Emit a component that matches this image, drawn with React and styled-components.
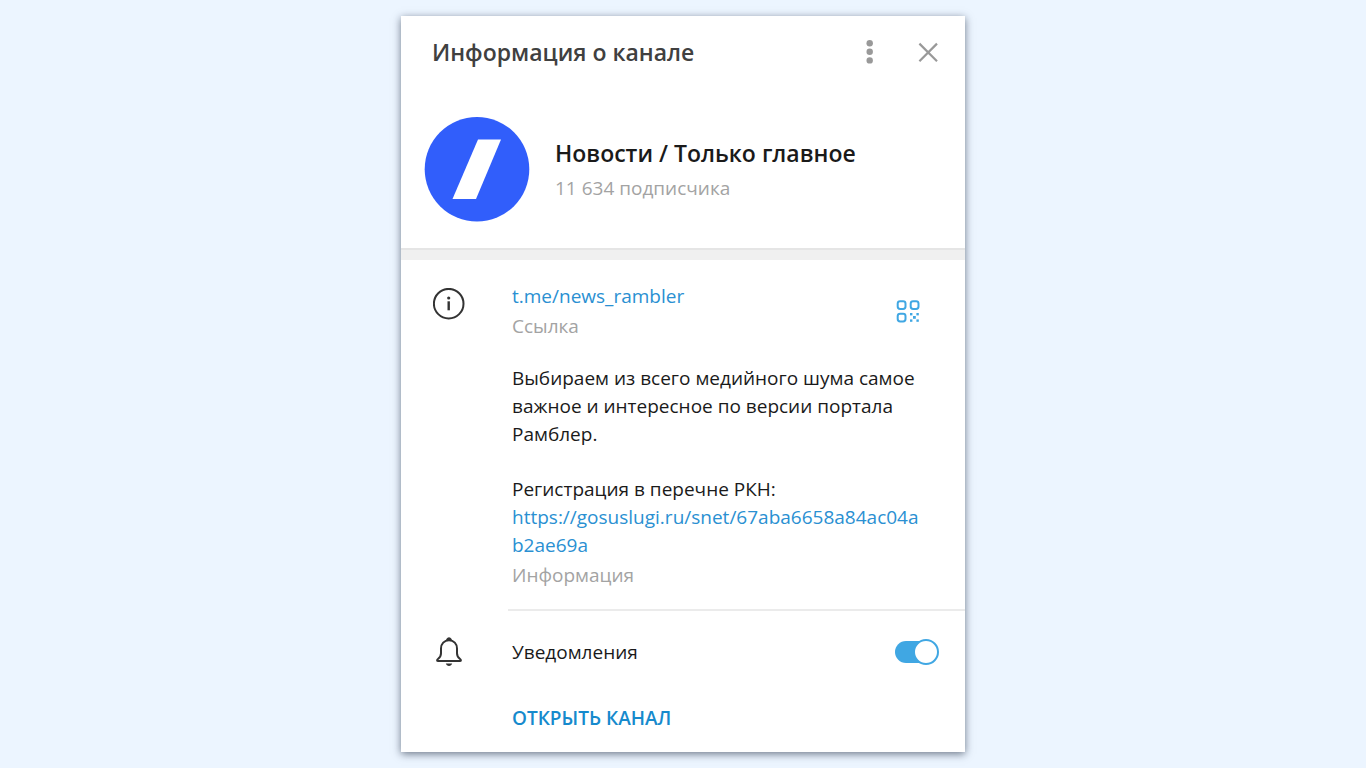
import React from "react";
import styled, { createGlobalStyle } from "styled-components";

const GlobalStyle = createGlobalStyle`
  *, *::before, *::after {
    box-sizing: border-box;
  }
  body {
    margin: 0;
    min-height: 100vh;
    background: #ecf5ff;
    color: #1a1a1a;
    font-family: "Open Sans", "Noto Sans", sans-serif;
    font-size: 19px;
    line-height: 28px;
  }
`;

const Page = styled.main`
  display: flex;
  justify-content: center;
  padding: 16px;
`;

const Card = styled.article`
  width: 100%;
  max-width: 564px;
  background: #fff;
  box-shadow: 0 2px 8px rgba(40, 52, 72, 0.65);
`;

const Header = styled.header`
  display: flex;
  align-items: center;
  gap: 26px;
  height: 72px;
  padding: 0 21px 0 31px;
`;

const Title = styled.h1`
  flex: 1;
  margin: 0;
  color: #404040;
  font-size: 23px;
  font-weight: 600;
  line-height: 32px;
`;

const IconButton = styled.button`
  display: flex;
  width: 32px;
  height: 32px;
  padding: 0;
  border: 0;
  background: none;
  color: ${(p) => p.$color};
  cursor: pointer;
`;

const Profile = styled.section`
  display: flex;
  align-items: center;
  gap: 25px;
  padding: 28px 23px 26px;
`;

const Avatar = styled.svg`
  flex: none;
  width: 106px;
  height: 106px;
`;

const ChannelName = styled.h2`
  margin: 0;
  color: #1a1a1a;
  font-size: 23px;
  font-weight: 600;
  line-height: 34px;
`;

const Muted = styled.p`
  margin: ${(p) => p.$top || 0}px 0 0;
  color: #a3a3a3;
`;

const Band = styled.hr`
  height: 12px;
  margin: 0;
  border: 0;
  border-top: 2px solid #e5e5e5;
  background: #f0f0f0;
`;

const Row = styled.section`
  display: grid;
  grid-template-columns: 32px 1fr;
  column-gap: 47px;
  padding: ${(p) => p.$padding};
`;

const LinkRow = styled.div`
  display: flex;
  align-items: center;
  justify-content: space-between;
`;

const TextLink = styled.a`
  color: #2a90d2;
  text-decoration: none;
  word-break: break-all;
`;

const Description = styled.p`
  margin: ${(p) => p.$top}px 0 0;
`;

const Separator = styled.hr`
  height: 2px;
  margin: 0 0 0 107px;
  border: 0;
  background: #ebebeb;
`;

const SwitchRow = styled.div`
  display: flex;
  align-items: center;
  justify-content: space-between;
`;

const Switch = styled.input`
  appearance: none;
  position: relative;
  width: 42px;
  height: 22px;
  margin: 0;
  border-radius: 11px;
  background: #40a7e3;
  cursor: pointer;

  &::after {
    content: "";
    position: absolute;
    top: -2px;
    right: -2px;
    width: 26px;
    height: 26px;
    border: 2px solid #40a7e3;
    border-radius: 50%;
    background: #fff;
  }

  &:not(:checked) {
    background: #b3b3b3;
  }

  &:not(:checked)::after {
    right: 18px;
    border-color: #b3b3b3;
  }
`;

const Footer = styled.footer`
  padding: 0 24px 20px 111px;
`;

const OpenButton = styled.button`
  padding: 0;
  border: 0;
  background: none;
  color: #168acd;
  font: inherit;
  font-weight: 600;
  cursor: pointer;
`;

const RowIcon = styled.svg`
  width: 32px;
  height: 32px;
  margin-top: ${(p) => p.$top || 0}px;
`;

function DotsIcon() {
  return (
    <svg width="32" height="32" viewBox="0 0 32 32" fill="currentColor" aria-hidden="true">
      <circle cx="15.7" cy="7.2" r="3.2" />
      <circle cx="15.7" cy="15.8" r="3.2" />
      <circle cx="15.7" cy="24.4" r="3.2" />
    </svg>
  );
}

function CloseIcon() {
  return (
    <svg width="32" height="32" viewBox="0 0 32 32" stroke="currentColor" strokeWidth="2.2" aria-hidden="true">
      <path d="M7.400 7.600 25 25.200M25 7.600 7.400 25.200" />
    </svg>
  );
}

function InfoIcon() {
  return (
    <RowIcon $top={6} viewBox="0 0 32 32" fill="none" aria-hidden="true">
      <circle cx="15.700" cy="15.700" r="14.800" stroke="#333" strokeWidth="2" />
      <circle cx="15.700" cy="10" r="1.600" fill="#333" />
      <path d="M15.700 13.300v9" stroke="#333" strokeWidth="2.400" />
    </RowIcon>
  );
}

function BellIcon() {
  return (
    <RowIcon viewBox="0 0 32 32" fill="none" aria-hidden="true">
      <path
        d="M16 4.200C11.200 4.200 8 7.800 8 12.400v4.800c0 2.500-.9 4.100-2.800 5.600-1.600 1.300-1.400 2.300.1 2.300h21.400c1.500 0 1.700-1 .1-2.300-1.900-1.500-2.800-3.100-2.800-5.600v-4.800C24 7.800 20.800 4.200 16 4.200Z"
        stroke="#333"
        strokeWidth="2"
        strokeLinejoin="round"
      />
      <path d="M13.600 4.200a2.400 2.400 0 0 1 4.800 0Z" fill="#333" stroke="#333" />
      <path d="M12.800 27.600h6.400c-.5 1.500-1.700 2.300-3.200 2.300s-2.700-.8-3.200-2.300Z" fill="#333" />
    </RowIcon>
  );
}

function QrIcon() {
  return (
    <svg width="32" height="32" viewBox="0 0 32 32" fill="none" aria-hidden="true">
      <g stroke="currentColor" strokeWidth="2">
        <rect x="5.700" y="6.200" width="7.800" height="7.800" rx="2.400" />
        <rect x="18.700" y="6.200" width="7.800" height="7.800" rx="2.400" />
        <rect x="5.700" y="18.700" width="7.800" height="7.800" rx="2.400" />
      </g>
      <g fill="currentColor">
        <rect x="18" y="18" width="2.400" height="2.400" />
        <rect x="24.400" y="18" width="2.400" height="2.400" />
        <rect x="21" y="21" width="2.800" height="2.800" />
        <rect x="18" y="24.400" width="2.400" height="2.400" />
        <rect x="24.400" y="24.400" width="2.400" height="2.400" />
      </g>
    </svg>
  );
}

export default function App() {
  return (
    <>
      <GlobalStyle />
      <Page>
        <Card>
          <Header>
            <Title>Информация о канале</Title>
            <IconButton type="button" $color="#999" aria-label="Меню">
              <DotsIcon />
            </IconButton>
            <IconButton type="button" $color="#999" aria-label="Закрыть">
              <CloseIcon />
            </IconButton>
          </Header>

          <Profile>
            <Avatar viewBox="0 0 106 106" aria-hidden="true">
              <circle cx="53" cy="53.2" r="52.300" fill="#315efb" />
              <path d="M54 23.500H77L52 83H28.500Z" fill="#fff" />
            </Avatar>
            <div>
              <ChannelName>Новости / Только главное</ChannelName>
              <Muted $top={4}>11 634 подписчика</Muted>
            </div>
          </Profile>

          <Band />

          <Row $padding="22px 41px 20px 32px">
            <InfoIcon />
            <div>
              <LinkRow>
                <div>
                  <TextLink href="#channel">t.me/news_rambler</TextLink>
                  <Muted $top={2}>Ссылка</Muted>
                </div>
                <IconButton type="button" $color="#40a7e3" aria-label="QR-код">
                  <QrIcon />
                </IconButton>
              </LinkRow>
              <Description $top={24}>
                Выбираем из всего медийного шума самое важное и интересное по версии портала Рамблер.
              </Description>
              <Description $top={27}>
                Регистрация в перечне РКН:
                <br />
                <TextLink href="#registry">https://gosuslugi.ru/snet/67aba6658a84ac04ab2ae69a</TextLink>
              </Description>
              <Muted $top={2}>Информация</Muted>
            </div>
          </Row>

          <Separator />

          <Row $padding="25px 28px 36px 32px">
            <BellIcon />
            <SwitchRow>
              <label htmlFor="notifications">Уведомления</label>
              <Switch id="notifications" type="checkbox" role="switch" defaultChecked />
            </SwitchRow>
          </Row>

          <Footer>
            <OpenButton type="button">ОТКРЫТЬ КАНАЛ</OpenButton>
          </Footer>
        </Card>
      </Page>
    </>
  );
}
